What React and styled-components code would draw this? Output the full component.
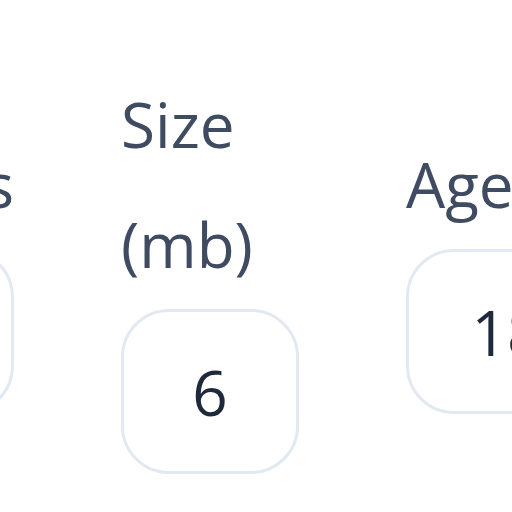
import React from 'react';
import styled, { createGlobalStyle } from 'styled-components';

const GlobalStyle = createGlobalStyle`
  html, body {
    margin: 0;
    padding: 0;
    background: #fff;
    overflow: hidden;
  }
  body {
    font-family: "Open Sans", "Noto Sans", sans-serif;
  }
`;

const Page = styled.div`
  width: 512px;
  height: 512px;
  overflow: hidden;
  padding-top: 64px;
  box-sizing: border-box;
`;

const FieldRow = styled.div`
  display: flex;
  align-items: center;
  gap: 107px;
  margin-left: -164px;
`;

const Field = styled.label`
  display: flex;
  flex-direction: column;
  gap: 5px;
  width: ${(p) => p.$width}px;
  flex-shrink: 0;
`;

const Label = styled.span`
  font-size: 62px;
  line-height: 120px;
  color: #3e4b61;
  white-space: pre-line;
  text-align: ${(p) => (p.$right ? 'right' : 'left')};
`;

const NumberBox = styled.input`
  box-sizing: border-box;
  width: 100%;
  height: 165px;
  border: 3px solid #e3e9f1;
  border-radius: 48px;
  background: #fff;
  font-family: inherit;
  font-size: 62px;
  color: #1e293b;
  text-align: center;
  padding: 0;
  outline: none;
`;

const fields = [
  { label: 'Files', value: '3', right: true, width: 178 },
  { label: 'Size\n(mb)', value: '6', width: 178 },
  { label: 'Age', value: '18', width: 202 },
];

export default function App() {
  return (
    <Page>
      <GlobalStyle />
      <FieldRow>
        {fields.map((f) => (
          <Field key={f.label} $width={f.width}>
            <Label $right={f.right}>{f.label}</Label>
            <NumberBox type="text" defaultValue={f.value} readOnly />
          </Field>
        ))}
      </FieldRow>
    </Page>
  );
}
